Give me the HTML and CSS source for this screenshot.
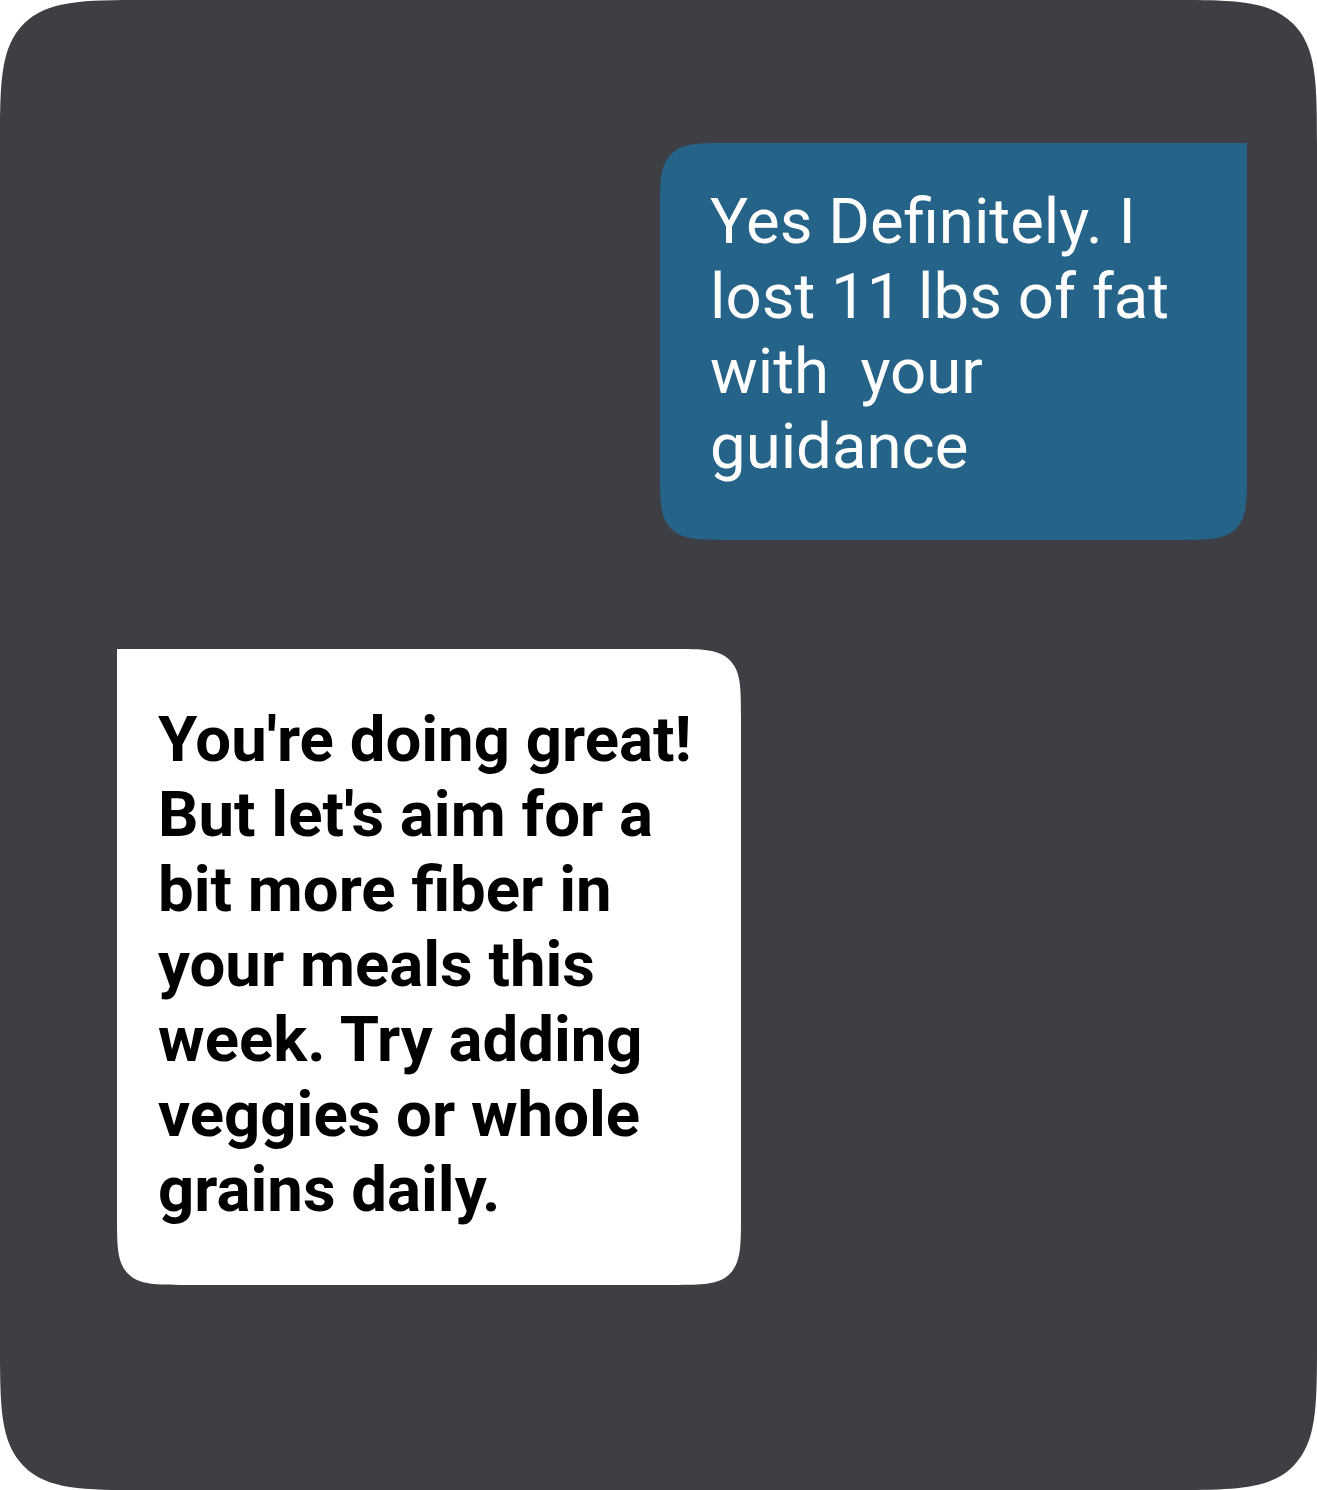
FILE: index.html
```html
<!DOCTYPE html>
<html>
<head>
<meta charset="utf-8">
<link rel="stylesheet" href="styles.css">
</head>
<body>
<div class="card">
  <div class="row row-out">
    <div class="bubble bubble-out">Yes Definitely. I<br>lost 11 lbs of fat<br>with&nbsp; your<br>guidance</div>
  </div>
  <div class="row row-in">
    <div class="bubble bubble-in">You're doing great!<br>But let's aim for a<br>bit more fiber in<br>your meals this<br>week. Try adding<br>veggies or whole<br>grains daily.</div>
  </div>
</div>
</body>
</html>
```
FILE: styles.css
```css
html, body {
  margin: 0;
  padding: 0;
  background: #ffffff;
}
.card {
  width: 1317px;
  height: 1490px;
  box-sizing: border-box;
  background: #3e3f44;
  border-radius: 115px;
  padding: 143px 70px 0 117px;
  display: flex;
  flex-direction: column;
  gap: 109px;
  font-family: Roboto, "Liberation Sans", sans-serif;
}
.row {
  display: flex;
}
.row-out {
  justify-content: flex-end;
}
.row-in {
  justify-content: flex-start;
}
.bubble {
  box-sizing: border-box;
  line-height: 75px;
  white-space: nowrap;
}
.bubble-out {
  width: 587px;
  height: 397px;
  background: #266389;
  color: #ffffff;
  font-size: 63.5px;
  font-weight: 400;
  padding: 41px 0 0 50px;
  border-radius: 55px 0 55px 55px;
}
.bubble-in {
  width: 624px;
  height: 636px;
  background: #ffffff;
  color: #000000;
  font-size: 63.5px;
  font-weight: 700;
  padding: 53px 0 0 41px;
  border-radius: 0 55px 55px 55px;
}
@supports (corner-shape: squircle) {
  .card {
    border-radius: 150px;
    corner-shape: squircle;
  }
  .bubble-out {
    border-radius: 70px 0 70px 70px;
    corner-shape: squircle;
  }
  .bubble-in {
    border-radius: 0 70px 70px 70px;
    corner-shape: squircle;
  }
}
```
